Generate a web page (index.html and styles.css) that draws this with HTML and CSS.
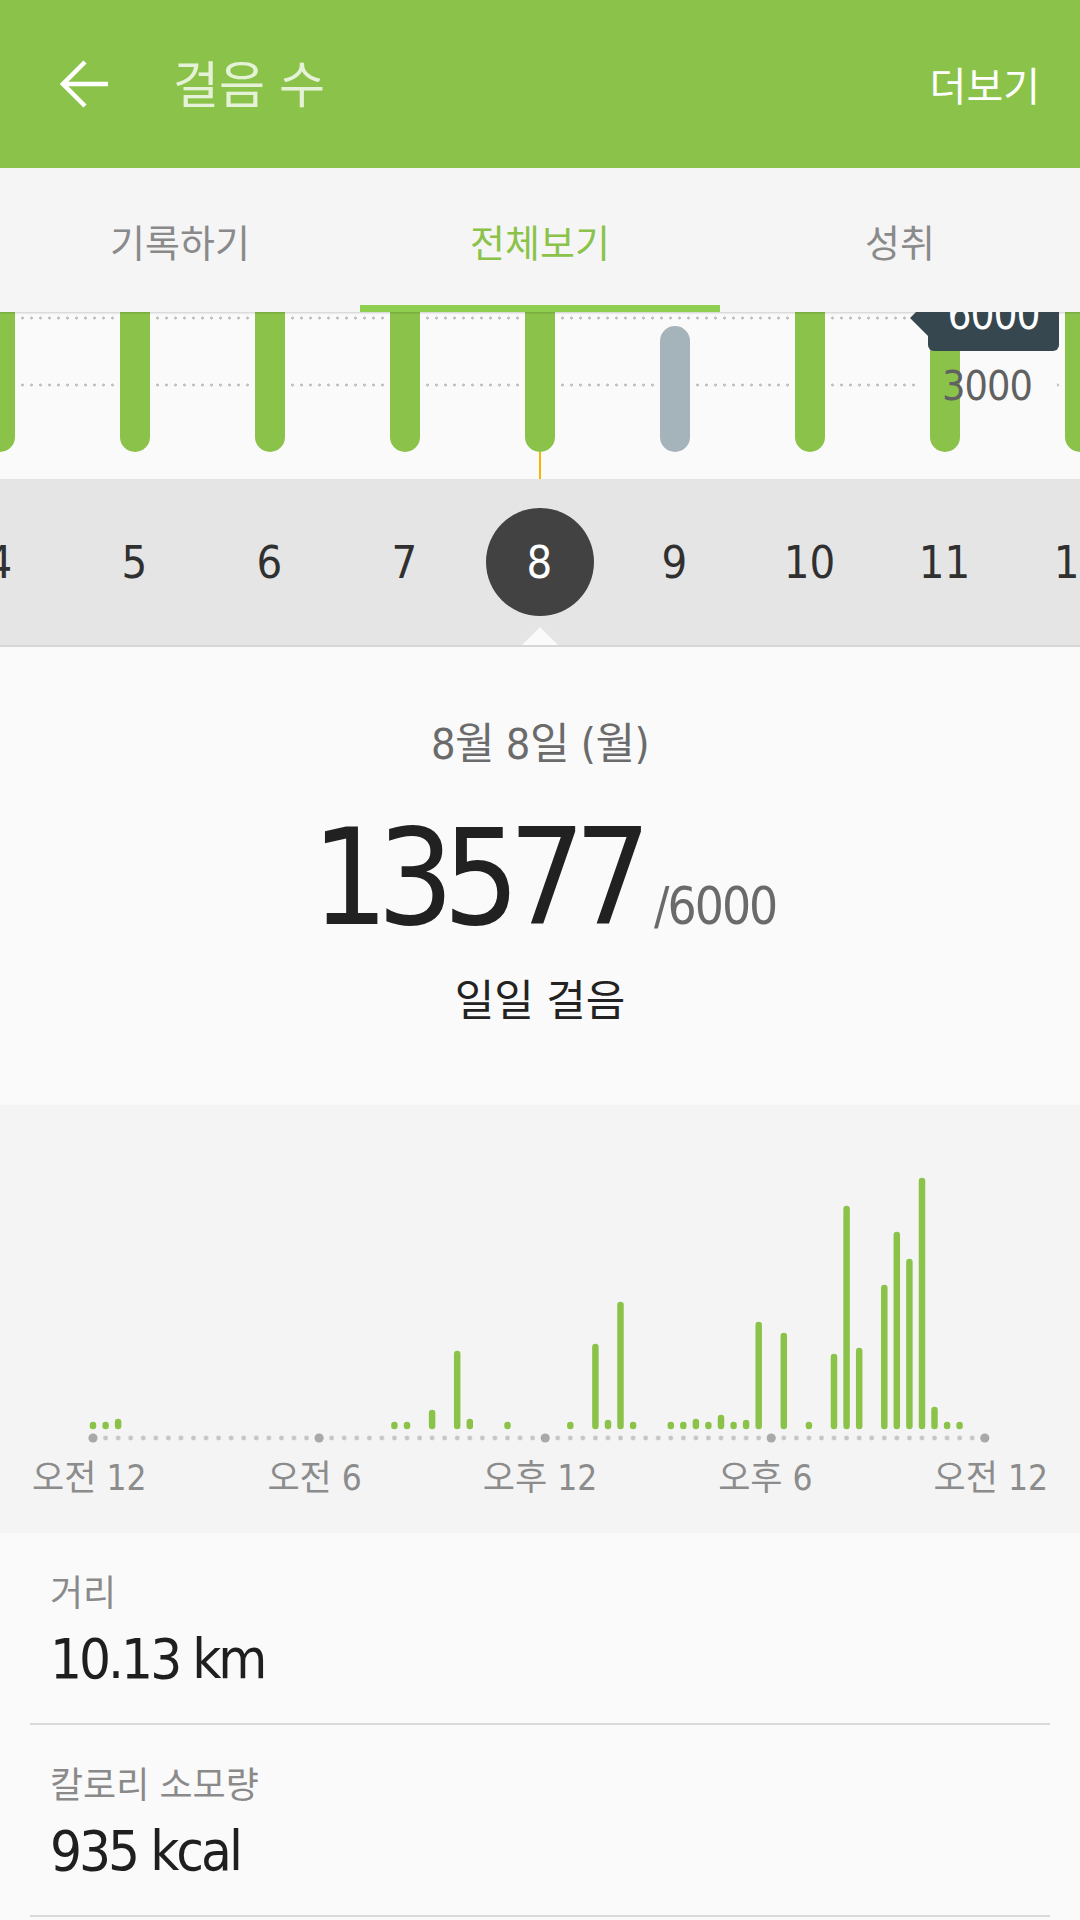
FILE: index.html
```html
<!DOCTYPE html>
<html lang="ko">
<head>
    <meta charset="UTF-8">
    <meta name="viewport" content="width=device-width, initial-scale=1.0">
    <title>걸음 수</title>
    <link rel="stylesheet" href="styles.css">
</head>
<body>
    <header class="appbar">
        <svg class="back" width="48" height="48" viewBox="0 0 48 48">
            <path d="M3 24H48M25 2L3 24L25 46" fill="none" stroke="#fff" stroke-width="4.5"/>
        </svg>
        <h1 class="title">걸음 수</h1>
        <span class="more">더보기</span>
    </header>

    <nav class="tabs">
        <div class="tab">기록하기</div>
        <div class="tab active">전체보기</div>
        <div class="tab">성취</div>
    </nav>

    <section class="week">
        <div class="bars">
            <div class="col"><div class="bar"></div><div class="stem"></div></div>
            <div class="col"><div class="bar"></div><div class="stem"></div></div>
            <div class="col"><div class="bar"></div><div class="stem"></div></div>
            <div class="col"><div class="bar"></div><div class="stem"></div></div>
            <div class="col"><div class="bar"></div><div class="stem now"></div></div>
            <div class="col"><div class="bar under"></div><div class="stem"></div></div>
            <div class="col"><div class="bar"></div><div class="stem"></div></div>
            <div class="col"><div class="bar"></div><div class="stem"></div></div>
            <div class="col"><div class="bar"></div><div class="stem"></div></div>
        </div>
        <div class="goal-flag">6000</div>
        <div class="half-label">3000</div>
    </section>

    <section class="days">
        <div class="day">4</div>
        <div class="day">5</div>
        <div class="day">6</div>
        <div class="day">7</div>
        <div class="day selected"><span>8</span></div>
        <div class="day">9</div>
        <div class="day">10</div>
        <div class="day">11</div>
        <div class="day">12</div>
    </section>

    <section class="summary">
        <p class="date">8월 8일 (월)</p>
        <p class="count"><span class="steps">13577</span><span class="goal">/6000</span></p>
        <p class="caption">일일 걸음</p>
    </section>

    <section class="hourly">
        <svg class="hour-chart" width="1080" height="345" viewBox="0 0 1080 345">
            <defs>
                <pattern id="tick" x="86.72" y="0" width="12.56" height="345" patternUnits="userSpaceOnUse">
                    <circle cx="6.28" cy="333" r="2.4" fill="#c6c6c6"/>
                </pattern>
            </defs>
            <rect x="88" y="326" width="900" height="14" fill="url(#tick)"/>
            <g fill="#a9a9a9">
                <circle cx="93" cy="333" r="4.6"/>
                <circle cx="319.1" cy="333" r="4.6"/>
                <circle cx="545.2" cy="333" r="4.6"/>
                <circle cx="771.2" cy="333" r="4.6"/>
                <circle cx="984.8" cy="333" r="4.6"/>
            </g>
            <g stroke="#8bc34a" stroke-width="6.5" stroke-linecap="round">
                <line x1="93" y1="321" x2="93" y2="320"/>
                <line x1="105.6" y1="321" x2="105.6" y2="320"/>
                <line x1="118.1" y1="321" x2="118.1" y2="317"/>
                <line x1="394.4" y1="321" x2="394.4" y2="320"/>
                <line x1="407" y1="321" x2="407" y2="320"/>
                <line x1="432.1" y1="321" x2="432.1" y2="308"/>
                <line x1="457.2" y1="321" x2="457.2" y2="249"/>
                <line x1="469.8" y1="321" x2="469.8" y2="317"/>
                <line x1="507.5" y1="321" x2="507.5" y2="320"/>
                <line x1="570.3" y1="321" x2="570.3" y2="320"/>
                <line x1="595.4" y1="321" x2="595.4" y2="242"/>
                <line x1="608" y1="321" x2="608" y2="318"/>
                <line x1="620.5" y1="321" x2="620.5" y2="200"/>
                <line x1="633.1" y1="321" x2="633.1" y2="320"/>
                <line x1="670.8" y1="321" x2="670.8" y2="320"/>
                <line x1="683.3" y1="321" x2="683.3" y2="320"/>
                <line x1="695.9" y1="321" x2="695.9" y2="317"/>
                <line x1="708.4" y1="321" x2="708.4" y2="320"/>
                <line x1="721" y1="321" x2="721" y2="313"/>
                <line x1="733.6" y1="321" x2="733.6" y2="320"/>
                <line x1="746.1" y1="321" x2="746.1" y2="318"/>
                <line x1="758.7" y1="321" x2="758.7" y2="220"/>
                <line x1="783.8" y1="321" x2="783.8" y2="231"/>
                <line x1="808.9" y1="321" x2="808.9" y2="320"/>
                <line x1="834" y1="321" x2="834" y2="252"/>
                <line x1="846.6" y1="321" x2="846.6" y2="104"/>
                <line x1="859.2" y1="321" x2="859.2" y2="246"/>
                <line x1="884.3" y1="321" x2="884.3" y2="183"/>
                <line x1="896.8" y1="321" x2="896.8" y2="130"/>
                <line x1="909.4" y1="321" x2="909.4" y2="157"/>
                <line x1="922" y1="321" x2="922" y2="76"/>
                <line x1="934.5" y1="321" x2="934.5" y2="305"/>
                <line x1="947.1" y1="321" x2="947.1" y2="320"/>
                <line x1="959.6" y1="321" x2="959.6" y2="320"/>
            </g>
        </svg>
        <div class="hour-labels">
            <span>오전 12</span>
            <span>오전 6</span>
            <span>오후 12</span>
            <span>오후 6</span>
            <span>오전 12</span>
        </div>
    </section>

    <section class="stats">
        <div class="stat">
            <p class="stat-label">거리</p>
            <p class="stat-value">10.13 km</p>
        </div>
        <div class="stat">
            <p class="stat-label">칼로리 소모량</p>
            <p class="stat-value">935 kcal</p>
        </div>
    </section>
</body>
</html>
```

FILE: styles.css
```css
body {
    margin: 0;
    width: 1080px;
    height: 1920px;
    overflow: hidden;
    background-color: #fafafa;
    font-family: "Noto Sans CJK KR", sans-serif;
}
p {
    margin: 0;
}
.appbar {
    height: 168px;
    background-color: #8bc34a;
    display: flex;
    align-items: center;
    padding: 0 40px 0 60px;
}
.back {
    display: block;
    flex: none;
}
.title {
    margin: 0 0 0 65px;
    font-size: 50px;
    font-weight: 400;
    color: rgba(255, 255, 255, 0.78);
    flex: 1;
    padding-bottom: 6px;
}
.more {
    font-size: 40px;
    color: #ffffff;
}
.tabs {
    height: 144px;
    background-color: #f5f5f5;
    display: grid;
    grid-template-columns: 1fr 1fr 1fr;
    position: relative;
    z-index: 2;
    box-shadow: 0 1px 2px rgba(0, 0, 0, 0.18);
}
.tab {
    display: flex;
    align-items: center;
    justify-content: center;
    font-size: 38px;
    color: #8a8a8a;
}
.tab.active {
    color: #8bc34a;
    box-shadow: inset 0 -7px #8fcf4f;
}
.week {
    height: 167px;
    overflow: hidden;
    position: relative;
    background:
        linear-gradient(to right, transparent 920px, #fafafa 920px, #fafafa 1057px, transparent 1057px) 0 71px / 100% 4px no-repeat,
        radial-gradient(circle, #c2c2c2 1.3px, transparent 1.8px) 0 4px / 9px 4px repeat-x,
        radial-gradient(circle, #c2c2c2 1.3px, transparent 1.8px) 0 71px / 9px 4px repeat-x,
        #fafafa;
}
.bars {
    display: flex;
    height: 100%;
    margin-left: -68px;
    position: relative;
    z-index: 1;
}
.col {
    width: 135px;
    flex: none;
    display: flex;
    flex-direction: column;
    justify-content: flex-end;
    align-items: center;
}
.bar {
    flex: none;
    width: 30px;
    height: 220px;
    border-radius: 15px;
    background-color: #8bc34a;
}
.bar.under {
    height: 126px;
    background-color: #a5b3ba;
}
.stem {
    flex: none;
    width: 2px;
    height: 27px;
}
.stem.now {
    background-color: #f5b600;
}
.goal-flag {
    position: absolute;
    z-index: 2;
    left: 928px;
    top: -25px;
    width: 131px;
    height: 64px;
    background-color: #37474f;
    border-radius: 0 0 6px 6px;
    color: #ffffff;
    font-family: "DejaVu Sans Condensed", Roboto, sans-serif;
    font-size: 42px;
    line-height: 56px;
    letter-spacing: -1px;
    text-align: center;
}
.goal-flag::before {
    content: "";
    position: absolute;
    left: -18px;
    top: 13px;
    border-top: 18px solid transparent;
    border-bottom: 18px solid transparent;
    border-right: 18px solid #37474f;
}
.half-label {
    position: absolute;
    z-index: 2;
    left: 942px;
    top: 52px;
    font-family: "DejaVu Sans Condensed", Roboto, sans-serif;
    font-size: 41px;
    line-height: 44px;
    letter-spacing: -1px;
    color: #616161;
}
.days {
    height: 166px;
    background-color: #e5e5e5;
    border-bottom: 2px solid #d6d6d6;
    display: flex;
    overflow: hidden;
}
.day {
    width: 135px;
    flex: none;
    display: flex;
    align-items: center;
    justify-content: center;
    font-family: "DejaVu Sans Condensed", Roboto, sans-serif;
    font-size: 45px;
    color: #303030;
}
.day:first-child {
    margin-left: -68px;
}
.day.selected {
    position: relative;
}
.day.selected span {
    width: 108px;
    height: 108px;
    border-radius: 50%;
    background-color: #424242;
    color: #ffffff;
    display: flex;
    align-items: center;
    justify-content: center;
}
.day.selected::after {
    content: "";
    position: absolute;
    left: 48px;
    bottom: -2px;
    border-left: 20px solid transparent;
    border-right: 20px solid transparent;
    border-bottom: 20px solid #fafafa;
}
.summary {
    height: 458px;
    box-sizing: border-box;
    padding-top: 72px;
    display: flex;
    flex-direction: column;
    align-items: center;
    background-color: #fafafa;
    font-family: "DejaVu Sans Condensed", "Noto Sans CJK KR", sans-serif;
}
.date {
    font-size: 43px;
    line-height: 50px;
    color: #6b6b6b;
    letter-spacing: -0.5px;
}
.count {
    margin-top: 41px;
    line-height: 137px;
    height: 137px;
    padding-left: 8px;
}
.steps {
    font-size: 134px;
    letter-spacing: -11px;
    color: #212121;
}
.goal {
    font-size: 51px;
    letter-spacing: -2px;
    color: #6a6a6a;
    margin-left: 14px;
}
.caption {
    margin-top: 30px;
    font-size: 43px;
    line-height: 48px;
    color: #222222;
}
.hourly {
    height: 428px;
    background-color: #f4f4f4;
}
.hour-chart {
    display: block;
}
.hour-labels {
    margin-top: 8px;
    padding: 0 32px;
    display: flex;
    justify-content: space-between;
    font-family: "DejaVu Sans Condensed", "Noto Sans CJK KR", sans-serif;
    font-size: 35px;
    line-height: 40px;
    color: #8c8c8c;
}
.stats {
    background-color: #fafafa;
}
.stat {
    margin: 0 30px;
    padding: 36px 20px 32px;
    border-bottom: 2px solid #d9d9d9;
}
.stat-label {
    font-size: 36px;
    line-height: 42px;
    color: #8a8a8a;
}
.stat-value {
    margin-top: 16px;
    font-family: "DejaVu Sans Condensed", Roboto, sans-serif;
    font-size: 56px;
    line-height: 64px;
    letter-spacing: -3px;
    color: #1f1f1f;
}
```
